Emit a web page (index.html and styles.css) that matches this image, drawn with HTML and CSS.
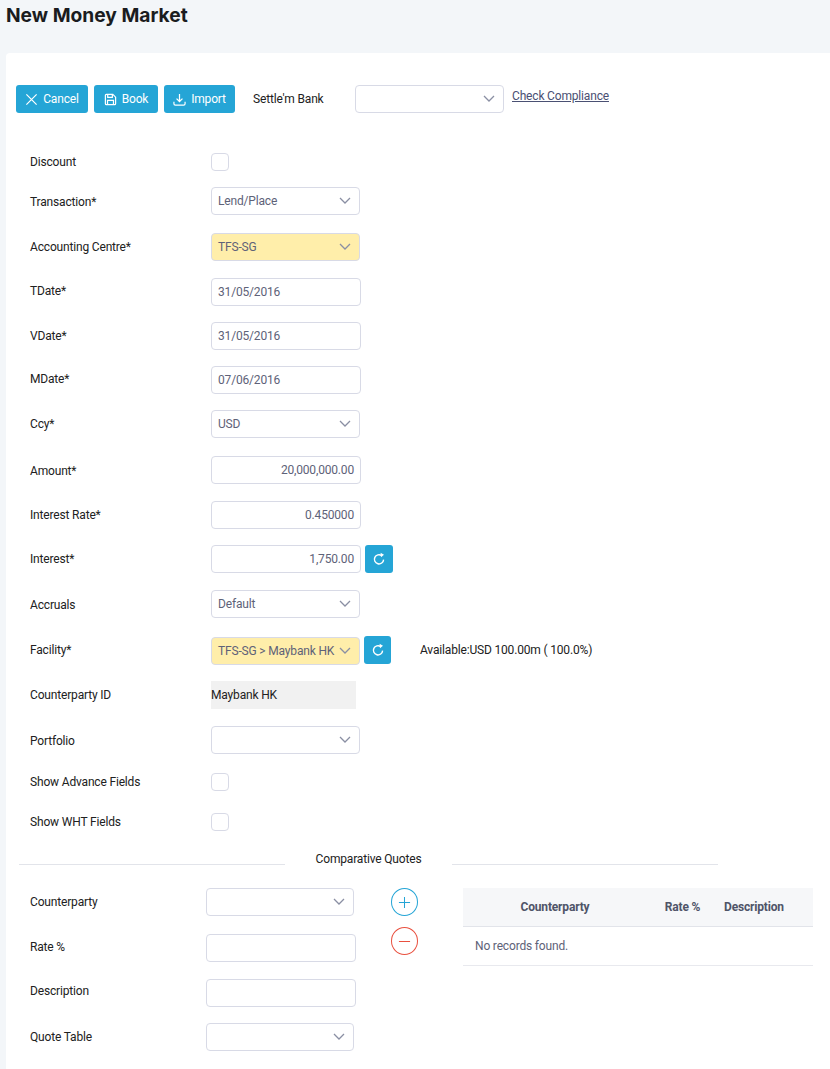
FILE: index.html
```html
<!DOCTYPE html>
<html lang="en">
<head>
<meta charset="utf-8">
<title>New Money Market</title>
<link rel="stylesheet" href="styles.css">
</head>
<body>
<header class="page-head"><h1>New Money Market</h1></header>
<main class="card">
  <div class="toolbar">
    <button class="btn btn-cancel"><svg class="ico" viewBox="0 0 14 14"><path d="M1.5 1.5l11 11M12.5 1.5l-11 11"/></svg>Cancel</button>
    <button class="btn btn-book"><svg class="ico" viewBox="0 0 14 14"><path d="M1.5 2.5a1 1 0 0 1 1-1h7l3 3v7a1 1 0 0 1-1 1h-9a1 1 0 0 1-1-1zM4 1.5v3.2h5V1.5M3.8 12.5V8h6.4v4.5"/></svg>Book</button>
    <button class="btn btn-import"><svg class="ico" viewBox="0 0 14 14"><path d="M7 1v8M3.8 6l3.2 3.2L10.2 6M1 9.5v2a1.5 1.5 0 0 0 1.5 1.5h9a1.5 1.5 0 0 0 1.5-1.5v-2"/></svg>Import</button>
    <span class="settle-label">Settle'm Bank</span>
    <div class="select settle-select"><span></span><svg class="chev" viewBox="0 0 12 7"><path d="M1 1l5 5 5-5"/></svg></div>
    <a class="compliance" href="#">Check Compliance</a>
  </div>

  <div class="form">
    <label>Discount</label><div class="check"></div>
    <label class="low">Transaction*</label><div class="select"><span>Lend/Place</span><svg class="chev" viewBox="0 0 12 7"><path d="M1 1l5 5 5-5"/></svg></div>
    <label>Accounting Centre*</label><div class="select hl"><span>TFS-SG</span><svg class="chev" viewBox="0 0 12 7"><path d="M1 1l5 5 5-5"/></svg></div>
    <label class="high">TDate*</label><div class="input">31/05/2016</div>
    <label>VDate*</label><div class="input">31/05/2016</div>
    <label class="high">MDate*</label><div class="input">07/06/2016</div>
    <label>Ccy*</label><div class="select"><span>USD</span><svg class="chev" viewBox="0 0 12 7"><path d="M1 1l5 5 5-5"/></svg></div>
    <label class="low">Amount*</label><div class="input num">20,000,000.00</div>
    <label>Interest Rate*</label><div class="input num">0.450000</div>
    <label>Interest*</label><div class="line"><div class="input num">1,750.00</div><button class="icon-btn"><svg class="ico" viewBox="0 0 14 14"><path d="M11.6 7.6a4.6 4.6 0 1 1-1.9-4"/><path class="solid" d="M8.6 0.8l3.4 2-3 2.4z"/></svg></button></div>
    <label class="low">Accruals</label><div class="select"><span>Default</span><svg class="chev" viewBox="0 0 12 7"><path d="M1 1l5 5 5-5"/></svg></div>
    <label class="high">Facility*</label><div class="line"><div class="select hl"><span>TFS-SG &gt; Maybank HK</span><svg class="chev" viewBox="0 0 12 7"><path d="M1 1l5 5 5-5"/></svg></div><button class="icon-btn tight"><svg class="ico" viewBox="0 0 14 14"><path d="M11.6 7.6a4.6 4.6 0 1 1-1.9-4"/><path class="solid" d="M8.6 0.8l3.4 2-3 2.4z"/></svg></button><span class="avail">Available:USD 100.00m ( 100.0%)</span></div>
    <label>Counterparty ID</label><div class="readonly">Maybank HK</div>
    <label class="low">Portfolio</label><div class="select"><span></span><svg class="chev" viewBox="0 0 12 7"><path d="M1 1l5 5 5-5"/></svg></div>
    <label>Show Advance Fields</label><div class="check"></div>
    <label>Show WHT Fields</label><div class="check"></div>
  </div>

  <div class="divider"><i></i><span>Comparative Quotes</span><i></i></div>

  <div class="quotes">
    <div class="qform">
      <label>Counterparty</label><div class="select"><span></span><svg class="chev" viewBox="0 0 12 7"><path d="M1 1l5 5 5-5"/></svg></div>
      <label class="high">Rate %</label><div class="input"></div>
      <label class="higher">Description</label><div class="input"></div>
      <label>Quote Table</label><div class="select"><span></span><svg class="chev" viewBox="0 0 12 7"><path d="M1 1l5 5 5-5"/></svg></div>
    </div>
    <div class="round-btns">
      <button class="round add"><svg viewBox="0 0 14 14"><path d="M1 7h12M7 1v12"/></svg></button>
      <button class="round del"><svg viewBox="0 0 14 14"><path d="M1 7h12"/></svg></button>
    </div>
    <table class="qtable">
      <thead><tr><th class="c1">Counterparty</th><th class="c2">Rate %</th><th class="c3">Description</th></tr></thead>
      <tbody><tr><td colspan="3">No records found.</td></tr></tbody>
    </table>
  </div>
</main>
</body>
</html>
```
FILE: styles.css
```css
* { box-sizing: border-box; }
html, body { margin: 0; height: 100%; overflow: hidden; }
body { background: #f3f6f9; font: 12px/14px Roboto, sans-serif; letter-spacing: -0.17px; color: #212121; }
.page-head { height: 53px; padding: 3px 0 0 6px; }
h1 { margin: 0; font: 700 19.2px/24px Inter, sans-serif; letter-spacing: 0; color: #1a1c20; }
.card { margin-left: 6px; height: 1016px; background: #fff; border-radius: 4px 0 0 0; padding: 32px 0 0 10px; }
.toolbar { display: flex; align-items: flex-start; height: 28px; }
.btn, .icon-btn { display: inline-flex; align-items: center; justify-content: center; height: 28px; border: 0; border-radius: 3px; background: #25a5d6; color: #fff; font: 12px/14px Roboto, sans-serif; letter-spacing: -0.17px; padding: 0; }
.btn-cancel { width: 72px; margin-right: 6px; }
.btn-book { width: 64px; margin-right: 6px; }
.btn-import { width: 71px; }
.ico { width: 13px; height: 13px; margin-right: 5px; fill: none; stroke: #fff; stroke-width: 1.3; flex: none; }
.settle-label { margin: 7px 0 0 18px; width: 102px; }
.settle-select { width: 149px; }
.compliance { margin: 4px 0 0 8px; color: #4a5073; text-decoration: underline; }
.select, .input { height: 28px; width: 149px; border: 1px solid #d8dae6; border-radius: 4px; background: #fff; color: #5e6278; padding: 0 6px; display: flex; align-items: center; flex: none; }
.select { justify-content: space-between; padding-right: 8px; padding-bottom: 1px; }
.input { width: 150px; }
.select.hl { background: #ffeeaa; }
.chev { width: 12px; height: 7px; fill: none; stroke: #8a8fa3; stroke-width: 1.3; flex: none; }
.num { justify-content: flex-end; }
.check { width: 18px; height: 18px; border: 1px solid #d8dae6; border-radius: 4px; background: #fff; }
.form { display: grid; grid-template-columns: 181px 1fr; grid-template-rows: 34px 46px 45px 44px 44px 44px 46px 45px 44px 45px 47px 44px 45px 47px 40px 32px; align-items: start; padding-left: 14px; margin-top: 40px; }
label { line-height: 18px; padding-top: 5px; }
label.low { padding-top: 6px; }
label.high { padding-top: 4px; }
label.higher { padding-top: 3px; }
.form label:first-child, .form label:nth-last-of-type(1), .form label:nth-last-of-type(2) { padding-top: 0; }
.line { display: flex; align-items: flex-start; }
.icon-btn { width: 28px; margin-left: 4px; flex: none; }
.icon-btn.tight { margin: -1px 0 0 4px; width: 27px; }
.icon-btn .ico { margin: 0; width: 14px; height: 14px; stroke-width: 1.4; }
.solid { fill: #fff; stroke: none; }
.avail { margin: 6px 0 0 29px; }
.readonly { width: 145px; height: 28px; background: #f1f1f1; display: flex; align-items: center; }
.divider { display: flex; align-items: flex-start; width: 699px; margin: 5px 0 0 3px; height: 38px; }
.divider i { height: 1px; background: #e2e4ea; margin-top: 14px; flex: 1; }
.divider i:first-child { flex: none; width: 266px; }
.divider span { width: 167px; text-align: center; flex: none; margin-top: 2px; }
.quotes { display: flex; align-items: flex-start; padding-left: 14px; }
.qform { display: grid; grid-template-columns: 176px 150px; grid-template-rows: 46px 45px 44px 28px; align-items: start; width: 326px; flex: none; }
.qform .select { width: 148px; }
.round-btns { display: flex; flex-direction: column; width: 27px; margin-left: 35px; flex: none; }
.round { width: 27px; height: 28px; border-radius: 50%; background: #fff; border: 1px solid #25a5d6; padding: 0; display: flex; align-items: center; justify-content: center; margin-bottom: 11px; }
.round svg { width: 13px; height: 13px; fill: none; stroke: #25a5d6; stroke-width: 1.1; }
.round.del { border-color: #e9503f; }
.round.del svg { stroke: #e9503f; }
.qtable { margin-left: 45px; width: 350px; flex: none; border-collapse: collapse; table-layout: fixed; }
.qtable th { background: #f6f7f9; height: 38px; font-weight: 700; color: #4f5468; border-bottom: 1px solid #e2e4ea; padding: 0; text-align: center; }
.c1 { width: 184px; }
.c2 { width: 71px; }
.qtable th.c3 { text-align: left; padding-left: 6px; }
.qtable td { height: 39px; padding: 0 12px; color: #5e6278; border-bottom: 1px solid #e8e9ee; }
```
